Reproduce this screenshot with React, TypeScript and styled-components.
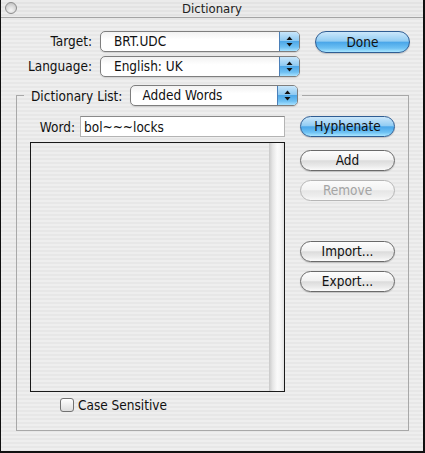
import React, { useState } from "react";
import styled, { createGlobalStyle } from "styled-components";

const GlobalStyle = createGlobalStyle`
  html, body {
    margin: 0;
    padding: 0;
    background: #000;
  }
  * {
    box-sizing: border-box;
  }
`;

const FONT = `"DejaVu Sans Condensed", "DejaVu Sans", sans-serif`;

const pinstripe = `repeating-linear-gradient(
  to bottom,
  #eeeeee 0px,
  #eeeeee 2px,
  #e7e7e7 2px,
  #e7e7e7 4px
)`;

export default function App() {
  const [word, setWord] = useState("bol~~~locks");
  const [caseSensitive, setCaseSensitive] = useState(false);

  return (
    <>
      <GlobalStyle />
      <Window>
        <TitleBar>
          <CloseDot />
          <Title>Dictionary</Title>
        </TitleBar>

        <TopGrid>
          <FieldLabel>Target:</FieldLabel>
          <Popup value="BRT.UDC" />
          <ButtonCell>
            <AquaButton $variant="blue" $height={22}>
              Done
            </AquaButton>
          </ButtonCell>

          <FieldLabel>Language:</FieldLabel>
          <Popup value="English: UK" />
          <span />
        </TopGrid>

        <GroupBox>
          <GroupLegend>
            <LegendLabel>Dictionary List:</LegendLabel>
            <Popup value="Added Words" width={168} padLeft={11} />
          </GroupLegend>

          <InnerGrid>
            <WordRow>
              <WordLabel>Word:</WordLabel>
              <WordInput
                value={word}
                onChange={(e) => setWord(e.target.value)}
              />
            </WordRow>
            <div>
              <AquaButton $variant="blue" $height={21}>
                Hyphenate
              </AquaButton>
            </div>

            <WordList>
              <ListBody />
              <ScrollTrack />
            </WordList>
            <ButtonColumn>
              <AquaButton $height={21}>Add</AquaButton>
              <AquaButton $height={21} disabled>
                Remove
              </AquaButton>
              <ButtonSpacer />
              <AquaButton $height={21}>Import...</AquaButton>
              <AquaButton $height={21}>Export...</AquaButton>
            </ButtonColumn>
          </InnerGrid>

          <CheckRow onClick={() => setCaseSensitive(!caseSensitive)}>
            <CheckBox $checked={caseSensitive}>{caseSensitive ? "✓" : ""}</CheckBox>
            <CheckText>Case Sensitive</CheckText>
          </CheckRow>
        </GroupBox>
      </Window>
    </>
  );
}

function Popup({
  value,
  width = 200,
  padLeft = 13,
}: {
  value: string;
  width?: number;
  padLeft?: number;
}) {
  return (
    <PopupBox style={{ width }}>
      <PopupText style={{ paddingLeft: padLeft }}>{value}</PopupText>
      <PopupArrows>
        <svg width="7" height="11" viewBox="0 0 7 11">
          <path d="M3.5 0.5 L6.5 4 L0.5 4 Z" fill="#111" />
          <path d="M3.5 10.5 L6.5 7 L0.5 7 Z" fill="#111" />
        </svg>
      </PopupArrows>
    </PopupBox>
  );
}

const Window = styled.div`
  width: 425px;
  height: 453px;
  background: ${pinstripe};
  border-left: 1px solid #111;
  border-right: 2px solid #111;
  border-bottom: 2px solid #111;
  font-family: ${FONT};
  font-size: 13.5px;
  color: #111;
  display: flex;
  flex-direction: column;
  overflow: hidden;
`;

const TitleBar = styled.div`
  height: 18px;
  flex-shrink: 0;
  position: relative;
  display: flex;
  align-items: center;
  justify-content: center;
  background: repeating-linear-gradient(
      to bottom,
      #ebebeb 0px,
      #ebebeb 2px,
      #e3e3e3 2px,
      #e3e3e3 4px
    );
  border-bottom: 1px solid #a4a4a4;
`;

const CloseDot = styled.div`
  position: absolute;
  left: 4px;
  top: 2px;
  width: 12px;
  height: 12px;
  border-radius: 50%;
  border: 1px solid #8c8c8c;
  background: radial-gradient(
    circle at 50% 70%,
    #f4f4f4 0%,
    #d6d6d6 55%,
    #b8b8b8 100%
  );
`;

const Title = styled.div`
  font-size: 13px;
  color: #222;
  line-height: 17px;
`;

const TopGrid = styled.div`
  margin-top: 13px;
  display: grid;
  grid-template-columns: 91px 200px 110px;
  grid-auto-rows: 21px;
  column-gap: 8px;
  row-gap: 4px;
  align-items: start;
`;

const FieldLabel = styled.div`
  text-align: right;
  line-height: 21px;
  white-space: nowrap;
`;

const ButtonCell = styled.div`
  padding-left: 7px;
`;

const PopupBox = styled.div`
  height: 21px;
  display: flex;
  border: 1px solid #7e7e7e;
  border-radius: 5px;
  overflow: hidden;
  background: linear-gradient(to bottom, #f2f2f2 0%, #ffffff 40%, #ffffff 100%);
  box-shadow: 0 1px 1px rgba(0, 0, 0, 0.12);
`;

const PopupText = styled.div`
  flex: 1;
  line-height: 19px;
  white-space: nowrap;
  overflow: hidden;
`;

const PopupArrows = styled.div`
  width: 20px;
  display: flex;
  align-items: center;
  justify-content: center;
  border-left: 1px solid #4a7fb8;
  background: linear-gradient(
    to bottom,
    #c8e6fb 0%,
    #8fcaf2 45%,
    #4ea8e8 50%,
    #6fc0f2 80%,
    #a8e2ff 100%
  );
`;

const AquaButton = styled.button<{ $variant?: "blue"; $height: number }>`
  width: 95px;
  height: ${(p) => p.$height}px;
  border-radius: 11px;
  font-family: ${FONT};
  font-size: 13.5px;
  padding: 0;
  line-height: ${(p) => p.$height - 2}px;
  cursor: pointer;
  color: #111;
  border: 1px solid ${(p) => (p.$variant === "blue" ? "#2f5d93" : "#6a6a6a")};
  background: ${(p) =>
    p.$variant === "blue"
      ? `linear-gradient(to bottom, #cbe7fb 0%, #93cdf3 45%, #4ba7e9 52%, #6cc0f3 80%, #a9e6ff 100%)`
      : `linear-gradient(to bottom, #fdfdfd 0%, #f1f1f1 45%, #dcdcdc 52%, #ebebeb 80%, #fbfbfb 100%)`};
  box-shadow: 0 1px 1px rgba(0, 0, 0, 0.18);

  &:disabled {
    color: #a4a4a4;
    border-color: #b6b6b6;
    box-shadow: none;
    cursor: default;
    background: linear-gradient(
      to bottom,
      #fbfbfb 0%,
      #f3f3f3 45%,
      #e6e6e6 52%,
      #eeeeee 80%,
      #f9f9f9 100%
    );
  }
`;

const GroupBox = styled.fieldset`
  margin: 8px 14px 0 15px;
  padding: 10px 14px 18px 13px;
  border: 1px solid #a8a8a8;
  min-width: 0;
`;

const GroupLegend = styled.legend`
  margin-left: -6px;
  padding: 0 4px 0 7px;
  display: flex;
  align-items: center;
  gap: 8px;
`;

const LegendLabel = styled.span`
  white-space: nowrap;
`;

const InnerGrid = styled.div`
  display: grid;
  grid-template-columns: 255px 95px;
  column-gap: 15px;
  row-gap: 5px;
  grid-template-rows: 21px 250px;
`;

const WordRow = styled.div`
  display: flex;
  align-items: center;
  justify-content: flex-end;
  gap: 5px;
`;

const WordLabel = styled.span`
  white-space: nowrap;
`;

const WordInput = styled.input`
  width: 205px;
  height: 21px;
  border: 1px solid #b4b4b4;
  border-top-color: #8a8a8a;
  background: #fff;
  font-family: ${FONT};
  font-size: 13.5px;
  padding: 0 3px;
  color: #111;
  outline: none;
`;

const WordList = styled.div`
  border: 1px solid #1a1a1a;
  display: flex;
`;

const ListBody = styled.div`
  flex: 1;
`;

const ScrollTrack = styled.div`
  width: 15px;
  background: linear-gradient(
    to right,
    #c9c9c9 0%,
    #e6e6e6 25%,
    #fafafa 55%,
    #f4f4f4 80%,
    #e2e2e2 100%
  );
`;

const ButtonColumn = styled.div`
  display: flex;
  flex-direction: column;
  gap: 9px;
  padding-top: 8px;
`;

const ButtonSpacer = styled.div`
  height: 22px;
`;

const CheckRow = styled.div`
  margin-top: 5px;
  padding-left: 30px;
  height: 15px;
  display: flex;
  align-items: center;
  gap: 4px;
  cursor: pointer;
`;

const CheckBox = styled.div<{ $checked: boolean }>`
  width: 14px;
  height: 14px;
  border-radius: 3px;
  border: 1px solid #727272;
  background: linear-gradient(to bottom, #ffffff 0%, #eeeeee 50%, #dddddd 100%);
  font-size: 11px;
  line-height: 12px;
  text-align: center;
`;

const CheckText = styled.span`
  white-space: nowrap;
`;
